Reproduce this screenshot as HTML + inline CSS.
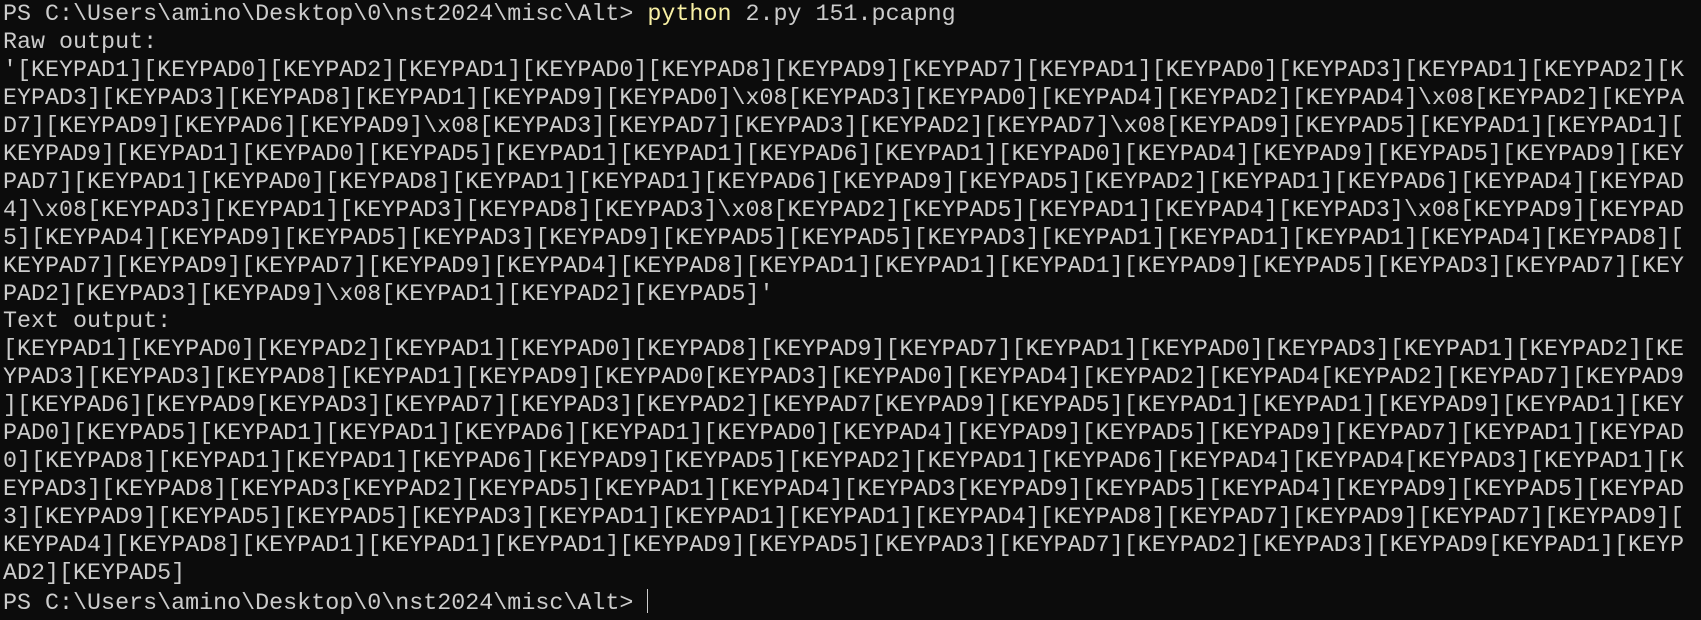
<!DOCTYPE html>
<html><head><meta charset="utf-8"><style>
html,body{margin:0;padding:0;background:#0c0c0c;width:1701px;height:620px;overflow:hidden}
#t{position:absolute;left:3px;top:2px;font-family:"Liberation Mono","DejaVu Sans Mono",monospace;font-size:23.35px;line-height:27.95px;color:#cccccc;white-space:pre}
.y{color:#f9f1a5}
.c{display:inline-block;width:1px;height:24px;background:#cccccc;vertical-align:-4px}
</style></head><body><div id="t">PS C:\Users\amino\Desktop\0\nst2024\misc\Alt&gt; <span class="y">python</span> 2.py 151.pcapng
Raw output:
'[KEYPAD1][KEYPAD0][KEYPAD2][KEYPAD1][KEYPAD0][KEYPAD8][KEYPAD9][KEYPAD7][KEYPAD1][KEYPAD0][KEYPAD3][KEYPAD1][KEYPAD2][K
EYPAD3][KEYPAD3][KEYPAD8][KEYPAD1][KEYPAD9][KEYPAD0]\x08[KEYPAD3][KEYPAD0][KEYPAD4][KEYPAD2][KEYPAD4]\x08[KEYPAD2][KEYPA
D7][KEYPAD9][KEYPAD6][KEYPAD9]\x08[KEYPAD3][KEYPAD7][KEYPAD3][KEYPAD2][KEYPAD7]\x08[KEYPAD9][KEYPAD5][KEYPAD1][KEYPAD1][
KEYPAD9][KEYPAD1][KEYPAD0][KEYPAD5][KEYPAD1][KEYPAD1][KEYPAD6][KEYPAD1][KEYPAD0][KEYPAD4][KEYPAD9][KEYPAD5][KEYPAD9][KEY
PAD7][KEYPAD1][KEYPAD0][KEYPAD8][KEYPAD1][KEYPAD1][KEYPAD6][KEYPAD9][KEYPAD5][KEYPAD2][KEYPAD1][KEYPAD6][KEYPAD4][KEYPAD
4]\x08[KEYPAD3][KEYPAD1][KEYPAD3][KEYPAD8][KEYPAD3]\x08[KEYPAD2][KEYPAD5][KEYPAD1][KEYPAD4][KEYPAD3]\x08[KEYPAD9][KEYPAD
5][KEYPAD4][KEYPAD9][KEYPAD5][KEYPAD3][KEYPAD9][KEYPAD5][KEYPAD5][KEYPAD3][KEYPAD1][KEYPAD1][KEYPAD1][KEYPAD4][KEYPAD8][
KEYPAD7][KEYPAD9][KEYPAD7][KEYPAD9][KEYPAD4][KEYPAD8][KEYPAD1][KEYPAD1][KEYPAD1][KEYPAD9][KEYPAD5][KEYPAD3][KEYPAD7][KEY
PAD2][KEYPAD3][KEYPAD9]\x08[KEYPAD1][KEYPAD2][KEYPAD5]'
Text output:
[KEYPAD1][KEYPAD0][KEYPAD2][KEYPAD1][KEYPAD0][KEYPAD8][KEYPAD9][KEYPAD7][KEYPAD1][KEYPAD0][KEYPAD3][KEYPAD1][KEYPAD2][KE
YPAD3][KEYPAD3][KEYPAD8][KEYPAD1][KEYPAD9][KEYPAD0[KEYPAD3][KEYPAD0][KEYPAD4][KEYPAD2][KEYPAD4[KEYPAD2][KEYPAD7][KEYPAD9
][KEYPAD6][KEYPAD9[KEYPAD3][KEYPAD7][KEYPAD3][KEYPAD2][KEYPAD7[KEYPAD9][KEYPAD5][KEYPAD1][KEYPAD1][KEYPAD9][KEYPAD1][KEY
PAD0][KEYPAD5][KEYPAD1][KEYPAD1][KEYPAD6][KEYPAD1][KEYPAD0][KEYPAD4][KEYPAD9][KEYPAD5][KEYPAD9][KEYPAD7][KEYPAD1][KEYPAD
0][KEYPAD8][KEYPAD1][KEYPAD1][KEYPAD6][KEYPAD9][KEYPAD5][KEYPAD2][KEYPAD1][KEYPAD6][KEYPAD4][KEYPAD4[KEYPAD3][KEYPAD1][K
EYPAD3][KEYPAD8][KEYPAD3[KEYPAD2][KEYPAD5][KEYPAD1][KEYPAD4][KEYPAD3[KEYPAD9][KEYPAD5][KEYPAD4][KEYPAD9][KEYPAD5][KEYPAD
3][KEYPAD9][KEYPAD5][KEYPAD5][KEYPAD3][KEYPAD1][KEYPAD1][KEYPAD1][KEYPAD4][KEYPAD8][KEYPAD7][KEYPAD9][KEYPAD7][KEYPAD9][
KEYPAD4][KEYPAD8][KEYPAD1][KEYPAD1][KEYPAD1][KEYPAD9][KEYPAD5][KEYPAD3][KEYPAD7][KEYPAD2][KEYPAD3][KEYPAD9[KEYPAD1][KEYP
AD2][KEYPAD5]
PS C:\Users\amino\Desktop\0\nst2024\misc\Alt&gt; <span class="c"></span></div></body></html>
